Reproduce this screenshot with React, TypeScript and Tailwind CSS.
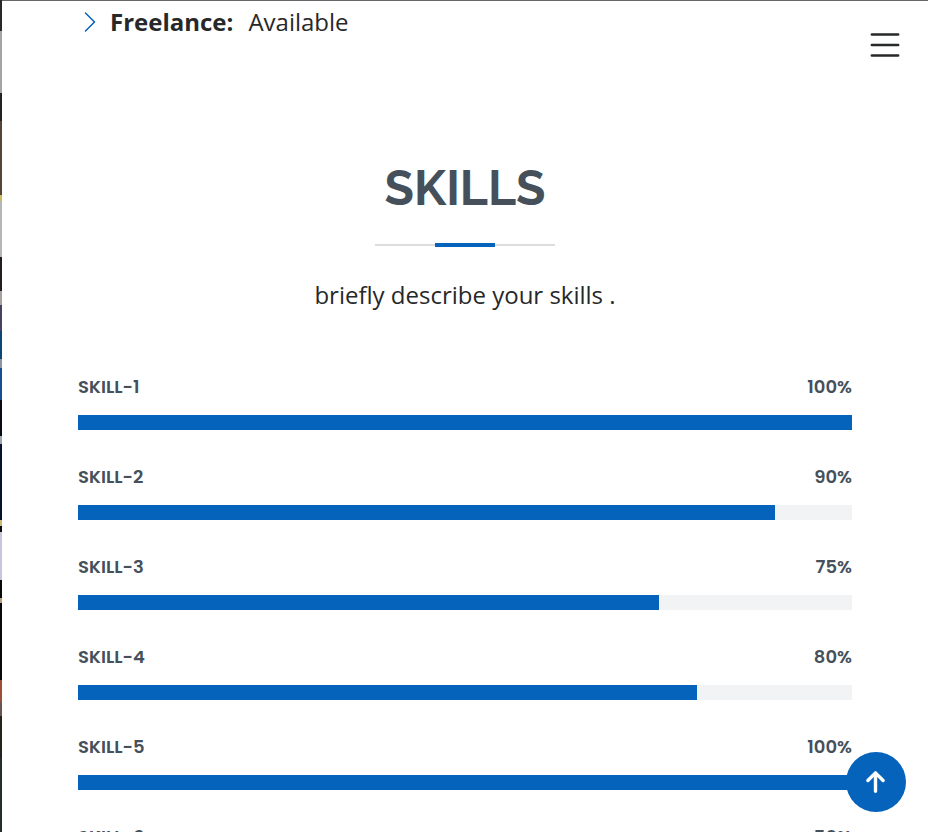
import { BsChevronRight, BsList } from "react-icons/bs";

const skills = [
  { name: "SKILL-1", value: 100 },
  { name: "SKILL-2", value: 90 },
  { name: "SKILL-3", value: 75 },
  { name: "SKILL-4", value: 80 },
  { name: "SKILL-5", value: 100 },
  { name: "SKILL-6", value: 50 },
];

// Bands of the thin backdrop edge: colour and relative height.
const edgeBands = [
  { color: "#26282b", size: 31 },
  { color: "#a5a5a5", size: 62 },
  { color: "#222222", size: 28 },
  { color: "#554536", size: 74 },
  { color: "#cdb95e", size: 6 },
  { color: "#b5b5b8", size: 56 },
  { color: "#241d20", size: 34 },
  { color: "#a8a29f", size: 14 },
  { color: "#46425f", size: 26 },
  { color: "#0b4674", size: 28 },
  { color: "#8995a0", size: 9 },
  { color: "#164e91", size: 32 },
  { color: "#080b11", size: 36 },
  { color: "#9aa7b0", size: 8 },
  { color: "#06122e", size: 76 },
  { color: "#c9b878", size: 6 },
  { color: "#0c0c14", size: 6 },
  { color: "#c6c5dc", size: 48 },
  { color: "#09090b", size: 18 },
  { color: "#b0a07c", size: 5 },
  { color: "#070809", size: 77 },
  { color: "#9b4f3b", size: 22 },
  { color: "#685651", size: 14 },
  { color: "#25231c", size: 42 },
  { color: "#262d2f", size: 74 },
];

function SkillBar({ name, value }: { name: string; value: number }) {
  return (
    <div className="h-[90px]">
      <div className="mb-4 flex h-6 items-center justify-between font-['Poppins','Inter',sans-serif] text-lg leading-6 font-semibold text-[#45505b]">
        <span>{name}</span>
        <span>{value}%</span>
      </div>
      <div
        role="progressbar"
        aria-label={name}
        aria-valuenow={value}
        aria-valuemin={0}
        aria-valuemax={100}
        className="h-[15px] bg-[#f2f3f5]"
      >
        <div className="h-full bg-[#0563bb]" style={{ width: `${value}%` }} />
      </div>
    </div>
  );
}

export default function App() {
  return (
    <div className="flex h-screen overflow-hidden bg-white font-['Open_Sans',sans-serif] text-[#272829]">
      <div aria-hidden="true" className="flex w-[2px] shrink-0 flex-col">
        {edgeBands.map((band, i) => (
          <div key={i} style={{ flexGrow: band.size, backgroundColor: band.color }} />
        ))}
      </div>
      <main className="min-w-0 flex-1 border-t border-[#666666] px-[76px]">
        <ul className="pt-[3px]">
          <li className="flex items-center gap-2 text-2xl leading-9">
            <BsChevronRight className="size-6 text-[#0563bb]" />
            <strong className="font-bold">Freelance:</strong>
            <span className="ml-[7px]">Available</span>
          </li>
        </ul>
        <section className="pt-[118px]">
          <header className="flex flex-col items-center">
            <h2 className="font-['Raleway','Lato',sans-serif] text-5xl leading-[60px] font-bold text-[#45505b]">SKILLS</h2>
            <div className="mt-[25px] flex h-1 w-[180px] items-center justify-center bg-[linear-gradient(#dddddd,#dddddd)] bg-[length:100%_2px] bg-center bg-no-repeat">
              <div className="h-1 w-[60px] bg-[#0563bb]" />
            </div>
            <p className="mt-[30px] text-2xl leading-9">briefly describe your skills .</p>
          </header>
          <div className="pt-[62px]">
            {skills.map((skill) => (
              <SkillBar key={skill.name} name={skill.name} value={skill.value} />
            ))}
          </div>
        </section>
      </main>
      <button type="button" aria-label="Open menu" className="fixed top-6 right-[22px] text-[#272829]">
        <BsList className="size-[42px]" />
      </button>
      <button
        type="button"
        aria-label="Back to top"
        className="fixed right-[22px] bottom-5 flex size-[60px] items-center justify-center rounded-full bg-[#0563bb] text-white"
      >
        <svg viewBox="0 0 24 24" className="size-6" fill="none" stroke="currentColor" strokeWidth="3.4" strokeLinecap="round" strokeLinejoin="round">
          <path d="M11.5 21.3V3.5M3.9 10.5l7.6-7.6 7.6 7.6" />
        </svg>
      </button>
    </div>
  );
}
